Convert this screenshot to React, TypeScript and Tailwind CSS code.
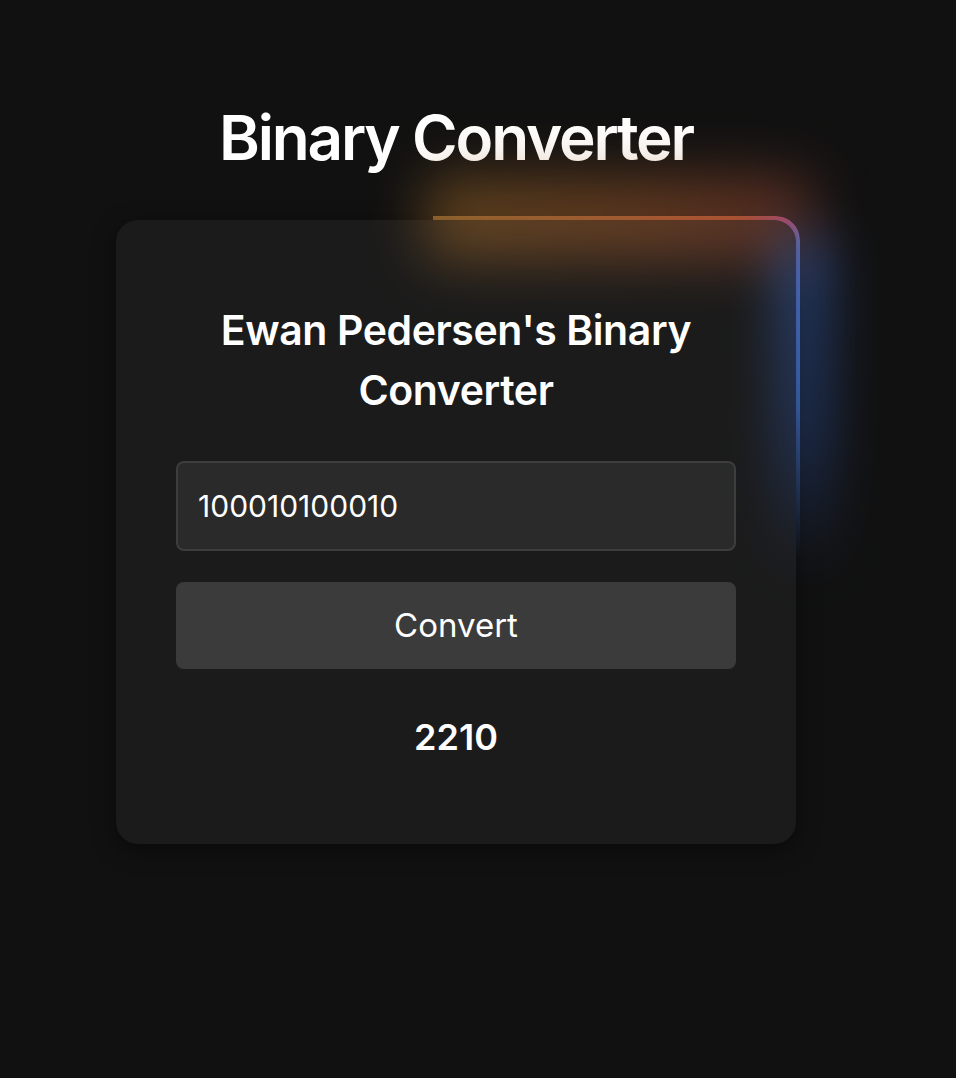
import React, { useState } from 'react';

const App: React.FC = () => {
  const [binary, setBinary] = useState('100010100010');
  const [result, setResult] = useState('2210');

  const handleConvert = () => {
    if (!/^[01]+$/.test(binary)) {
      setResult('Invalid binary');
      return;
    }
    setResult(parseInt(binary, 2).toString());
  };

  return (
    <div className="flex min-h-screen flex-col items-center bg-[#111111] pr-[44px] pt-[107px] text-white [font-family:Inter,'Noto_Sans',sans-serif]">
      <h1 className="text-center text-[62px] font-semibold leading-none tracking-[-0.035em]">
        Binary Converter
      </h1>

      <div className="relative mt-[51px] w-[680px]">
        {/* gradient edge, top right */}
        <div className="absolute -right-[4px] -top-[4px] h-[345px] w-[367px] rounded-tr-[24px] bg-[conic-gradient(from_0deg_at_0%_100%,#8a6432_0deg,#a8603a_28deg,#c45c3a_42deg,#b84c8c_46deg,#5a78cc_49deg,#4a74c2_62deg,#2f4a70_90deg)] [mask-image:linear-gradient(to_bottom,black_55%,transparent_100%)]" />

        <div className="relative flex flex-col rounded-[22px] bg-[#1b1b1b] px-[60px] py-[80px] shadow-[0_6px_24px_rgba(0,0,0,0.45)]">
          <h2 className="text-center text-[41px] font-semibold leading-[60px] tracking-[-0.01em]">
            Ewan Pedersen's Binary Converter
          </h2>

          <div className="mt-[41px] flex flex-col gap-[31px]">
            <input
              type="text"
              value={binary}
              onChange={(e) => setBinary(e.target.value)}
              className="h-[90px] w-full rounded-lg border-2 border-[#3d3d3d] bg-[#2a2a2a] px-5 text-[30px] text-white outline-none"
            />
            <button
              onClick={handleConvert}
              className="h-[87px] w-full rounded-lg bg-[#3b3b3b] text-[33px] text-white"
            >
              Convert
            </button>
          </div>

          <p className="mt-[41px] text-center text-[36px] font-semibold leading-[54px]">{result}</p>
        </div>

        {/* glow */}
        <div className="pointer-events-none absolute -top-[44px] left-[310px] h-[84px] w-[385px] bg-[linear-gradient(to_right,#a8702a,#ac602e_55%,#9a4634)] opacity-50 blur-[28px]" />
        <div className="pointer-events-none absolute left-[662px] top-[16px] h-[340px] w-[52px] bg-[linear-gradient(to_bottom,#4070d0,#2c4e96_60%,transparent)] opacity-50 blur-[26px]" />
      </div>
    </div>
  );
};

export default App;
